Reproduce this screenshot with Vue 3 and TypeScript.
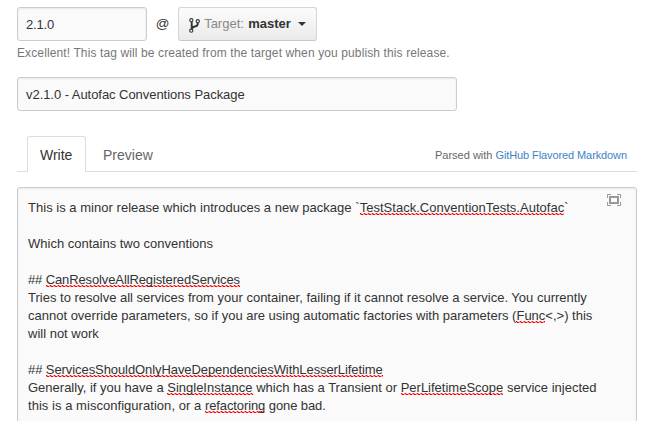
<script setup lang="ts">
interface Part { text: string; flagged?: boolean }
interface Line { width: string; parts: Part[] }

const lines: Line[] = [
  { width: 'wide', parts: [{ text: 'This is a minor release which introduces a new package `' }, { text: 'TestStack.ConventionTests.Autofac', flagged: true }, { text: '`' }] },
  { width: '', parts: [] },
  { width: '', parts: [{ text: 'Which contains two conventions' }] },
  { width: '', parts: [] },
  { width: 'narrow', parts: [{ text: '## ' }, { text: 'CanResolveAllRegisteredServices', flagged: true }] },
  { width: '', parts: [{ text: 'Tries to resolve all services from your container, failing if it cannot resolve a service. You currently' }] },
  { width: '', parts: [{ text: 'cannot override parameters, so if you are using automatic factories with parameters (' }, { text: 'Func', flagged: true }, { text: '<,>) this' }] },
  { width: '', parts: [{ text: 'will not work' }] },
  { width: '', parts: [] },
  { width: 'snug', parts: [{ text: '## ' }, { text: 'ServicesShouldOnlyHaveDependenciesWithLesserLifetime', flagged: true }] },
  { width: '', parts: [{ text: 'Generally, if you have a ' }, { text: 'SingleInstance', flagged: true }, { text: ' which has a Transient or ' }, { text: 'PerLifetimeScope', flagged: true }, { text: ' service injected' }] },
  { width: 'closing', parts: [{ text: 'this is a misconfiguration, or a ' }, { text: 'refactoring', flagged: true }, { text: ' gone bad.' }] },
]
</script>

<template>
  <main class="release">
    <div class="tag-row">
      <div class="field tag"><span class="tag-text">2.1.0</span></div>
      <span class="at">@</span>
      <button class="target" type="button">
        <svg class="branch" width="12" height="15" viewBox="0 0 12 15" fill="none">
          <g stroke="#333" stroke-width="1.1">
            <circle cx="2.3" cy="2.2" r="1.6" />
            <circle cx="2.3" cy="12.7" r="1.6" />
            <circle cx="8.8" cy="3.2" r="1.6" />
          </g>
          <path d="M2.700 4v7M8.700 4.900v1c0 2-1.400 2.200-2.900 2.600-1.600.4-2.900.8-3.100 2.400" stroke="#333" stroke-width="1.900" />
        </svg>
        <span class="label">Target:</span><b class="name">master</b>
        <svg class="caret" width="8" height="4" viewBox="0 0 8 4"><path d="M0 0h8L4 4z" fill="#333" /></svg>
      </button>
    </div>
    <p class="hint"><span>Excellent! This tag will be created from the target when you publish this release.</span></p>
    <div class="field title"><span class="title-text">v2.1.0 - Autofac Conventions Package</span></div>
    <nav class="tabs">
      <a class="tab active"><span>Write</span></a>
      <a class="tab"><span>Preview</span></a>
      <span class="parsed">Parsed with <a>GitHub Flavored Markdown</a></span>
    </nav>
    <div class="field editor">
      <div class="copy">
        <div v-for="(line, i) in lines" :key="i" class="line"><span :class="line.width"><span v-for="(part, j) in line.parts" :key="j" :class="{ flagged: part.flagged }">{{ part.text }}</span></span></div>
      </div>
      <svg class="expand" width="14" height="12" viewBox="0 0 14 12" fill="none" stroke="#999">
        <path d="M4 .5H.5V4M10 .5h3.500V4M4 11.500H.5V8M10 11.500h3.500V8" />
        <path d="M3 3h8v6H3z" stroke-width="2" />
      </svg>
    </div>
  </main>
</template>

<style>
body { margin: 0; background: #fff; overflow: hidden; }
</style>

<style scoped>
.release { box-sizing: border-box; width: 650px; height: 421px; overflow: hidden; padding: 7px 13px 0 17px; font: 13px/18px "Liberation Sans", Arial, sans-serif; color: #333; }
.field { box-sizing: border-box; border: 1px solid #ccc; border-radius: 3px; background: #fafafa; box-shadow: inset 0 1px 2px rgba(0, 0, 0, .075); white-space: pre; }
.tag-row { display: flex; height: 34px; align-items: center; }
.tag { width: 130px; height: 34px; padding: 8px; }
.tag-text { letter-spacing: -.15px; }
.at { width: 31px; text-align: center; font-size: 13.5px; }
.target { box-sizing: border-box; display: flex; align-items: center; width: 139px; height: 34px; padding: 0 0 0 10px; border: 1px solid #d5d5d5; border-bottom-color: #c8c8c8; border-radius: 3px; background: linear-gradient(#fcfcfc, #eaeaea); font: 13px/18px "Liberation Sans", Arial, sans-serif; color: #333; }
.branch { margin: 2px 3px 0 0; flex: none; }
.label { margin-left: -2px; color: #888; width: 44px; white-space: nowrap; }
.name { width: 47px; }
.caret { margin-left: 5px; }
.hint { margin: 3px 0 0; height: 17px; font-size: 12px; line-height: 17px; letter-spacing: .115px; color: #777; white-space: nowrap; }
.hint span { position: relative; top: 1px; }
.title { width: 440px; height: 34px; margin-top: 16px; padding: 8px; }
.title-text { letter-spacing: -.05px; }
.tabs { display: flex; box-sizing: border-box; width: 620px; height: 36px; margin-top: 25px; padding-left: 10px; border-bottom: 1px solid #ddd; }
.tab { box-sizing: border-box; height: 36px; padding: 10px 16px 0 17px; font-size: 14px; line-height: 18px; color: #666; }
.tab.active { width: 59px; padding: 9px 0 0 12px; border: 1px solid #ddd; border-bottom: 0; border-radius: 3px 3px 0 0; background: #fff; color: #333; }
.parsed { margin: 10px 10px 0 auto; font-size: 11px; line-height: 18px; color: #666; white-space: nowrap; }
.parsed a { color: #4183c4; letter-spacing: -.1px; }
.editor { display: flex; width: 620px; height: 260px; margin-top: 15px; padding: 11px 10px 0; }
.copy { flex: 1; }
.line { height: 18px; white-space: pre; }
.wide { letter-spacing: .025px; }
.narrow { letter-spacing: -.12px; }
.snug { letter-spacing: -.08px; }
.closing { letter-spacing: .04px; }
.closing .flagged, .closing .flagged + span { letter-spacing: -.1px; }
.expand { margin: -5px 5px 0 0; flex: none; }
.flagged { background-image: linear-gradient(90deg, #f00 1px, #f99 1px 2px, transparent 2px 3px, #f99 3px), linear-gradient(90deg, #f99 1px, #f00 1px 2px, #f00 2px 3px, #f99 3px); background-size: 4px 1px, 4px 1px; background-position: 0 calc(100% - 1px), 0 100%; background-repeat: repeat-x; }
</style>
